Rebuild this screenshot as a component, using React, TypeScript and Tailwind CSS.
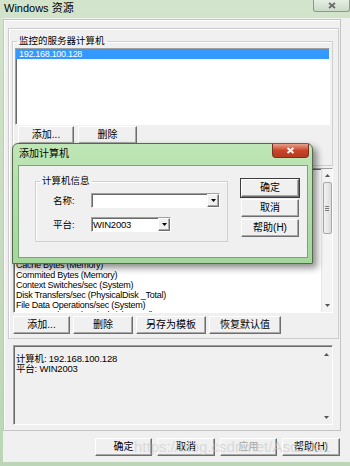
import React from "react";

const raised =
  "border border-t-white border-l-white border-r-[#6e6e6e] border-b-[#6e6e6e] shadow-[inset_-1px_-1px_0_#a8a8a8] bg-[#f0f0f0]";
const sunken =
  "border border-t-[#a0a0a0] border-l-[#a0a0a0] border-r-white border-b-white shadow-[inset_1px_1px_0_#696969]";

function Btn({
  children,
  w,
  disabled,
  def,
}: {
  children: React.ReactNode;
  w: string;
  disabled?: boolean;
  def?: boolean;
}) {
  return (
    <div
      className={
        "flex items-center justify-center h-[18px] shrink-0 text-[10px] leading-none " +
        raised +
        " " +
        w +
        (disabled ? " text-[#a3a3a3]" : " text-black") +
        (def ? " outline outline-1 outline-[#3c3c3c]" : "")
      }
    >
      {children}
    </div>
  );
}

function Arrow({ up }: { up?: boolean }) {
  return (
    <svg width="5" height="3" viewBox="0 0 5 3">
      {up ? <path d="M0 3 L2.5 0 L5 3 Z" fill="#555" /> : <path d="M0 0 L5 0 L2.5 3 Z" fill="#555" />}
    </svg>
  );
}

function ScrollV({ thumb }: { thumb?: boolean }) {
  return (
    <div className="w-[11px] h-full flex flex-col items-center bg-[#f4f4f4] border-l border-[#e6e6e6]">
      <div className="h-[13px] w-full flex items-center justify-center">
        <Arrow up />
      </div>
      {thumb ? (
        <div className="w-[9px] h-[52px] rounded-[2px] border border-[#a8a8a8] bg-[linear-gradient(to_right,#f2f2f2,#dcdcdc)] flex flex-col items-center justify-center gap-[1px]">
          <div className="w-[4px] h-[1px] bg-[#777]" />
          <div className="w-[4px] h-[1px] bg-[#777]" />
          <div className="w-[4px] h-[1px] bg-[#777]" />
        </div>
      ) : null}
      <div className="flex-1" />
      <div className="h-[13px] w-full flex items-center justify-center">
        <Arrow />
      </div>
    </div>
  );
}

function Combo({ w, value }: { w: string; value?: string }) {
  return (
    <div className={"h-[15px] bg-white flex items-stretch " + sunken + " " + w}>
      <div className="flex-1 pl-[1px] text-[9.5px] leading-[13px] tracking-[-0.2px] text-black">{value}</div>
      <div className={"w-[12px] flex items-center justify-center " + raised}>
        <svg width="5" height="3" viewBox="0 0 5 3">
          <path d="M0 0 L5 0 L2.5 3 Z" fill="#000" />
        </svg>
      </div>
    </div>
  );
}

const counters = [
  "% Disk Time (PhysicalDisk _Total)",
  "% Processor Time (Processor _Total)",
  "% Total Processor Time (System)",
  "Available Bytes (Memory)",
  "Avg. Disk Queue Length (PhysicalDisk _Total)",
  "Avg. Disk sec/Transfer (PhysicalDisk _Total)",
  "Bytes Received/sec (Network Interface)",
  "Bytes Sent/sec (Network Interface)",
  "Bytes Total/sec (Network Interface)",
  "Cache Bytes (Memory)",
  "Commited Bytes (Memory)",
  "Context Switches/sec (System)",
  "Disk Transfers/sec (PhysicalDisk _Total)",
  "File Data Operations/sec (System)",
  "Free Megabytes (LogicalDisk _Total)",
];

export default function App() {
  return (
    <div className="w-[350px] h-[466px] overflow-hidden relative flex flex-col bg-[linear-gradient(to_bottom,#d2e4cc,#bcd5b6)] font-['Liberation_Sans','Noto_Sans_CJK_SC',sans-serif] text-black">
      {/* title bar */}
      <div className="h-[18px] shrink-0 flex items-start justify-between">
        <span className="pl-[4px] pt-[2px] text-[11px] leading-[13px]">Windows 资源</span>
        <div className="w-[37px] h-[12px] rounded-b-[3px] border border-t-0 border-[#8a9c87] bg-[linear-gradient(#e6eee4,#cbdac8)] flex items-center justify-center">
          <svg width="8" height="7" viewBox="0 0 8 7">
            <path d="M1 1 L7 6 M7 1 L1 6" stroke="#6b6b6b" strokeWidth="1.8" />
          </svg>
        </div>
      </div>

      {/* body */}
      <div className="flex-1 ml-[3px] mb-[4px] bg-[#f0f0f0] flex flex-col">
        <div className="mt-[1px] w-[338px] h-[412px] border border-[#c4c4c4] shadow-[inset_1px_1px_0_#fff] flex flex-col">
          {/* inner panel */}
          <div className="ml-[4px] mt-[8px] w-[331px] h-[311px] border border-[#cdcdcd] shadow-[inset_1px_1px_0_#fff] flex flex-col">
            <fieldset className="ml-[3px] mt-[6px] w-[320px] h-[131px] border border-[#d0d0d0] shadow-[inset_1px_1px_0_#fff] px-[2px] pt-[1px]">
              <legend className="ml-[2px] px-[2px] text-[9.5px] leading-[12px]">监控的服务器计算机</legend>
              <div className={"w-[315px] h-[77px] bg-white " + sunken}>
                <div className="h-[10px] bg-[#3399ff] text-white text-[9px] leading-[10px] tracking-[-0.3px] pl-[3px]">
                  192.168.100.128
                </div>
              </div>
              <div className="flex gap-[4px] mt-[1px] ml-[3px]">
                <Btn w="w-[56px]">添加...</Btn>
                <Btn w="w-[59px]">删除</Btn>
              </div>
            </fieldset>

            <div className={"ml-[4px] mt-[2px] w-[320px] h-[145px] bg-white flex " + sunken}>
              <div className="flex-1 overflow-hidden pt-[1px] pl-[2px]">
                {counters.map((c) => (
                  <div key={c} className="h-[10px] text-[9px] leading-[10px] tracking-[-0.25px] whitespace-nowrap">
                    {c}
                  </div>
                ))}
              </div>
              <ScrollV thumb />
            </div>

            <div className="flex gap-[3px] mt-[3px] ml-[4px]">
              <Btn w="w-[57px]">添加...</Btn>
              <Btn w="w-[60px]">删除</Btn>
              <Btn w="w-[70px]">另存为模板</Btn>
              <Btn w="w-[72px]">恢复默认值</Btn>
            </div>
          </div>

          {/* info textbox */}
          <div className={"ml-[9px] mt-[6px] w-[320px] h-[80px] bg-[#f0f0f0] flex " + sunken}>
            <div className="flex-1 pt-[8px] pl-[2px] text-[9.5px] leading-[10px] tracking-[-0.2px]">
              <div>计算机: 192.168.100.128</div>
              <div>平台: WIN2003</div>
            </div>
            <div className="w-[11px] h-full flex flex-col items-center pt-[7px] pb-[5px]">
              <Arrow up />
              <div className="flex-1" />
              <Arrow />
            </div>
          </div>
        </div>

        <div className="flex justify-end gap-[5px] pr-[10px] mt-[7px]">
          <Btn w="w-[57px]">确定</Btn>
          <Btn w="w-[58px]">取消</Btn>
          <Btn w="w-[57px]" disabled>
            应用
          </Btn>
          <Btn w="w-[58px]">帮助(H)</Btn>
        </div>
      </div>

      {/* watermark */}
      <div className="absolute left-[134px] top-[438px] text-[15px] leading-[18px] text-[rgba(200,200,200,0.6)] whitespace-nowrap pointer-events-none">
        https://blog.csdn.net/Asdsda1
      </div>

      {/* dialog */}
      <div className="absolute left-[12px] top-[143px] w-[301px] h-[121px] rounded-t-[6px] border border-[#56694f] bg-[linear-gradient(to_bottom,#bfe6b6,#a3d79b)] shadow-[4px_4px_7px_rgba(0,0,0,0.45)] flex flex-col">
        <div className="h-[21px] flex items-start justify-between">
          <span className="pl-[6px] pt-[4px] text-[10px] leading-[12px]">添加计算机</span>
          <div className="mr-[3px] w-[37px] h-[14px] rounded-b-[4px] border border-t-0 border-[#7a3020] bg-[linear-gradient(to_bottom,#e9a08a,#c9452a_50%,#b63a22)] flex items-center justify-center">
            <svg width="9" height="7" viewBox="0 0 9 7">
              <path d="M1.5 1 L7.5 6 M7.5 1 L1.5 6" stroke="#fff" strokeWidth="2" />
            </svg>
          </div>
        </div>
        <div className="ml-[5px] w-[290px] h-[93px] bg-[#f0f0f0] border border-[#7aa675] flex items-start">
          <fieldset className="ml-[16px] mt-[9px] w-[193px] h-[67px] border border-[#d0d0d0] shadow-[inset_1px_1px_0_#fff] pl-[4px]">
            <legend className="px-[2px] text-[9.5px] leading-[12px]">计算机信息</legend>
            <div className="mt-[6px] flex items-center">
              <span className="w-[51px] pl-[13px] text-[9.5px] leading-[12px]">名称:</span>
              <Combo w="w-[129px]" />
            </div>
            <div className="mt-[9px] flex items-center">
              <span className="w-[51px] pl-[13px] text-[9.5px] leading-[12px]">平台:</span>
              <Combo w="w-[80px]" value="WIN2003" />
            </div>
          </fieldset>
          <div className="ml-[13px] mt-[13px] flex flex-col gap-[2px]">
            <Btn w="w-[58px]" def>
              确定
            </Btn>
            <Btn w="w-[58px]">取消</Btn>
            <Btn w="w-[58px]">帮助(H)</Btn>
          </div>
        </div>
      </div>
    </div>
  );
}
